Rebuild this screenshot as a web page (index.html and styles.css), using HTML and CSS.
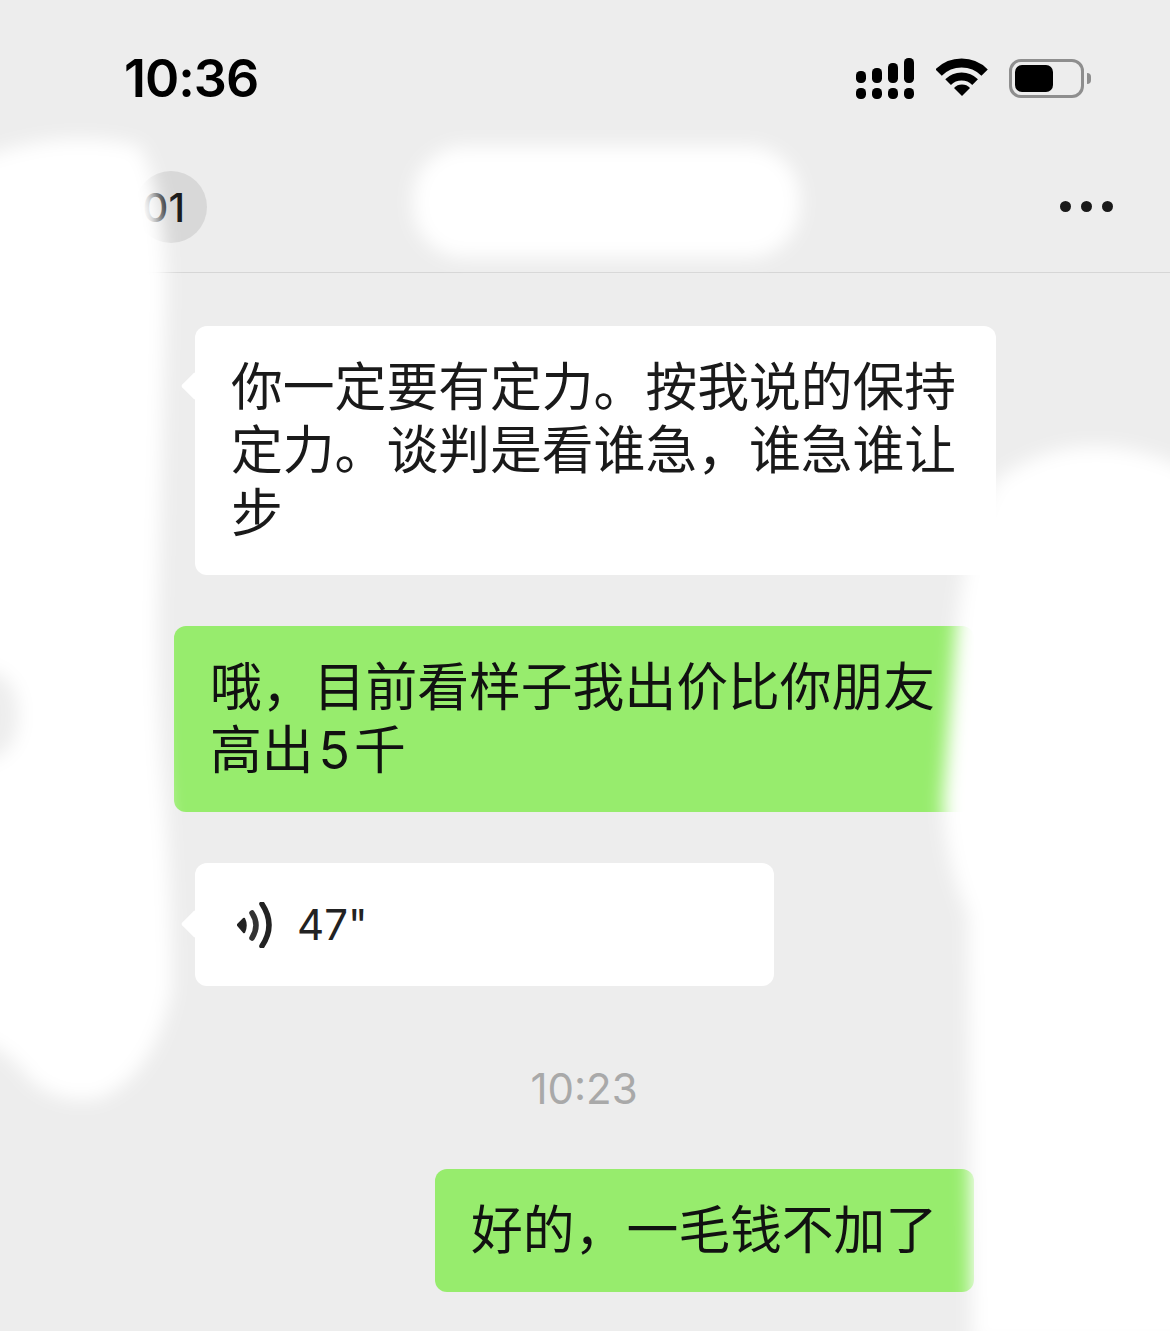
FILE: index.html
```html
<!DOCTYPE html>
<html lang="zh-CN">
<head>
    <meta charset="UTF-8">
    <meta name="viewport" content="width=device-width, initial-scale=1.0">
    <title>聊天</title>
    <link rel="stylesheet" href="styles.css">
</head>
<body>
    <div class="phone">
        <header class="status-bar">
            <span class="clock">10:36</span>
            <div class="status-icons">
                <svg class="icon-signal" width="58" height="41" viewBox="0 0 58 41">
                    <rect x="0" y="13" width="10" height="12" rx="4.5"/>
                    <rect x="16" y="10" width="10" height="15" rx="4.5"/>
                    <rect x="32" y="5" width="10" height="20" rx="4.5"/>
                    <rect x="48" y="0" width="10" height="25" rx="4.5"/>
                    <rect x="0" y="30" width="10" height="11" rx="4.5"/>
                    <rect x="16" y="30" width="10" height="11" rx="4.5"/>
                    <rect x="32" y="30" width="10" height="11" rx="4.5"/>
                    <rect x="48" y="30" width="10" height="11" rx="4.5"/>
                </svg>
                <svg class="icon-wifi" width="52" height="40" viewBox="0 0 52 40">
                    <path d="M2.6 14.6a32.5 32.5 0 0 1 46 0" fill="none" stroke="#000" stroke-width="9"/>
                    <path d="M12.1 24.1a19 19 0 0 1 27 0" fill="none" stroke="#000" stroke-width="8"/>
                    <path d="M18 30a11 11 0 0 1 16 0l-8 8z"/>
                </svg>
                <div class="battery">
                    <div class="battery-level"></div>
                </div>
                <div class="battery-cap"></div>
            </div>
        </header>

        <nav class="nav">
            <div class="back-badge">01</div>
            <div class="more"><i></i><i></i><i></i></div>
        </nav>

        <main class="chat">
            <div class="bubble incoming msg-long">你一定要有定力。按我说的保持<br>定力。谈判是看谁急，谁急谁让<br>步</div>
            <div class="bubble outgoing msg-offer">哦，目前看样子我出价比你朋友<br>高出<span class="num">5</span>千</div>
            <div class="bubble incoming msg-voice">
                <svg class="icon-voice" width="36" height="46" viewBox="0 0 36 46">
                    <path d="M1 23l6-6q3 6 0 13z" fill="#222" stroke="#222" stroke-width="2.5" stroke-linejoin="round"/>
                    <path d="M15 11q8 12 0 25" fill="none" stroke="#333" stroke-width="5.5" stroke-linecap="round"/>
                    <path d="M25 2q14 21 0 42" fill="none" stroke="#222" stroke-width="5.5" stroke-linecap="round"/>
                </svg>
                <span class="duration">47"</span>
            </div>
            <div class="time">10:23</div>
            <div class="bubble outgoing msg-short">好的，一毛钱不加了</div>
        </main>

        <svg class="smudges" width="1170" height="1331" viewBox="0 0 1170 1331">
            <defs>
                <filter id="soft" x="-20%" y="-20%" width="140%" height="140%">
                    <feGaussianBlur stdDeviation="9"/>
                </filter>
            </defs>
            <g fill="#fff" filter="url(#soft)">
                <rect x="413" y="146" width="387" height="112" rx="52"/>
                <path d="M-30 162Q60 126 140 146Q164 190 166 290L158 620Q158 720 165 800Q172 900 172 990Q155 1075 100 1098Q60 1106 30 1080Q10 1050 -30 1035L-30 762Q18 762 18 715Q18 668 -30 668Z"/>
                <path d="M1190 470Q1080 418 996 480Q966 535 957 620L943 800Q944 860 968 915L972 1345L1190 1345Z"/>
            </g>
        </svg>
    </div>
</body>
</html>
```

FILE: styles.css
```css
* {
    box-sizing: border-box;
}
html, body {
    margin: 0;
    padding: 0;
}
body {
    background: #ededed;
    font-family: Inter, "Noto Sans CJK SC", sans-serif;
    color: #1a1a1a;
}
.phone {
    position: relative;
    width: 1170px;
    height: 1331px;
    overflow: hidden;
}

/* status bar */
.status-bar {
    height: 156px;
    display: flex;
    justify-content: space-between;
    align-items: center;
    padding: 0 79px 0 124px;
}
.clock {
    font-size: 52px;
    font-weight: 600;
    letter-spacing: -1px;
    color: #000;
}
.status-icons {
    display: flex;
    align-items: center;
}
.icon-wifi {
    margin-left: 22px;
}
.battery {
    margin-left: 21px;
    width: 75px;
    height: 39px;
    border: 3px solid #8e8e8e;
    border-radius: 12px;
    padding: 3px;
}
.battery-level {
    width: 38px;
    height: 27px;
    background: #000;
    border-radius: 7px;
}
.battery-cap {
    margin-left: 3px;
    width: 4px;
    height: 11px;
    background: #8e8e8e;
    border-radius: 0 4px 4px 0;
}

/* nav */
.nav {
    height: 117px;
    display: flex;
    justify-content: space-between;
    align-items: flex-start;
    padding: 15px 57px 0 135px;
    border-bottom: 1px solid #d6d6d6;
}
.back-badge {
    width: 72px;
    height: 72px;
    border-radius: 50%;
    background: #d8d8d8;
    display: flex;
    align-items: center;
    justify-content: flex-end;
    padding-right: 22px;
    font-size: 40px;
    font-weight: 500;
    color: #1a1a1a;
}
.more {
    height: 71px;
    display: flex;
    align-items: center;
    gap: 10px;
}
.more i {
    display: block;
    width: 11px;
    height: 11px;
    border-radius: 50%;
    background: #1a1a1a;
}

/* messages */
.chat {
    padding-top: 53px;
    display: flex;
    flex-direction: column;
    align-items: flex-start;
}
.bubble {
    position: relative;
    padding: 30px 36px;
    border-radius: 12px;
    font-size: 51.8px;
    line-height: 63px;
    white-space: nowrap;
    margin-bottom: 51px;
}
.incoming {
    background: #fff;
    margin-left: 195px;
}
.incoming::before {
    content: "";
    position: absolute;
    left: -10px;
    top: 50px;
    width: 20px;
    height: 20px;
    background: #fff;
    border-radius: 2px;
    transform: rotate(45deg);
}
.outgoing {
    background: #97ec6d;
    color: #111;
}
.msg-long {
    width: 801px;
}
.msg-offer {
    margin-left: 174px;
    width: 800px;
}
.msg-offer .num {
    margin: 0 4px 0 5px;
}
.msg-voice {
    width: 579px;
    height: 123px;
    display: flex;
    align-items: center;
    margin-bottom: 0;
    padding: 0 0 0 42px;
}
.msg-voice::before {
    top: 51px;
}
.icon-voice {
    flex: none;
}
.duration {
    margin-left: 24px;
    font-size: 42px;
    color: #222;
}
.time {
    width: 100%;
    height: 183px;
    display: flex;
    align-items: center;
    justify-content: center;
    font-size: 42px;
    color: #a9a9a9;
    padding: 21px 2px 0 0;
}
.msg-short {
    margin-left: 435px;
    width: 539px;
    margin-bottom: 0;
}

/* white smudges painted over the screenshot */
.smudges {
    position: absolute;
    top: 0;
    left: 0;
    pointer-events: none;
}
```
